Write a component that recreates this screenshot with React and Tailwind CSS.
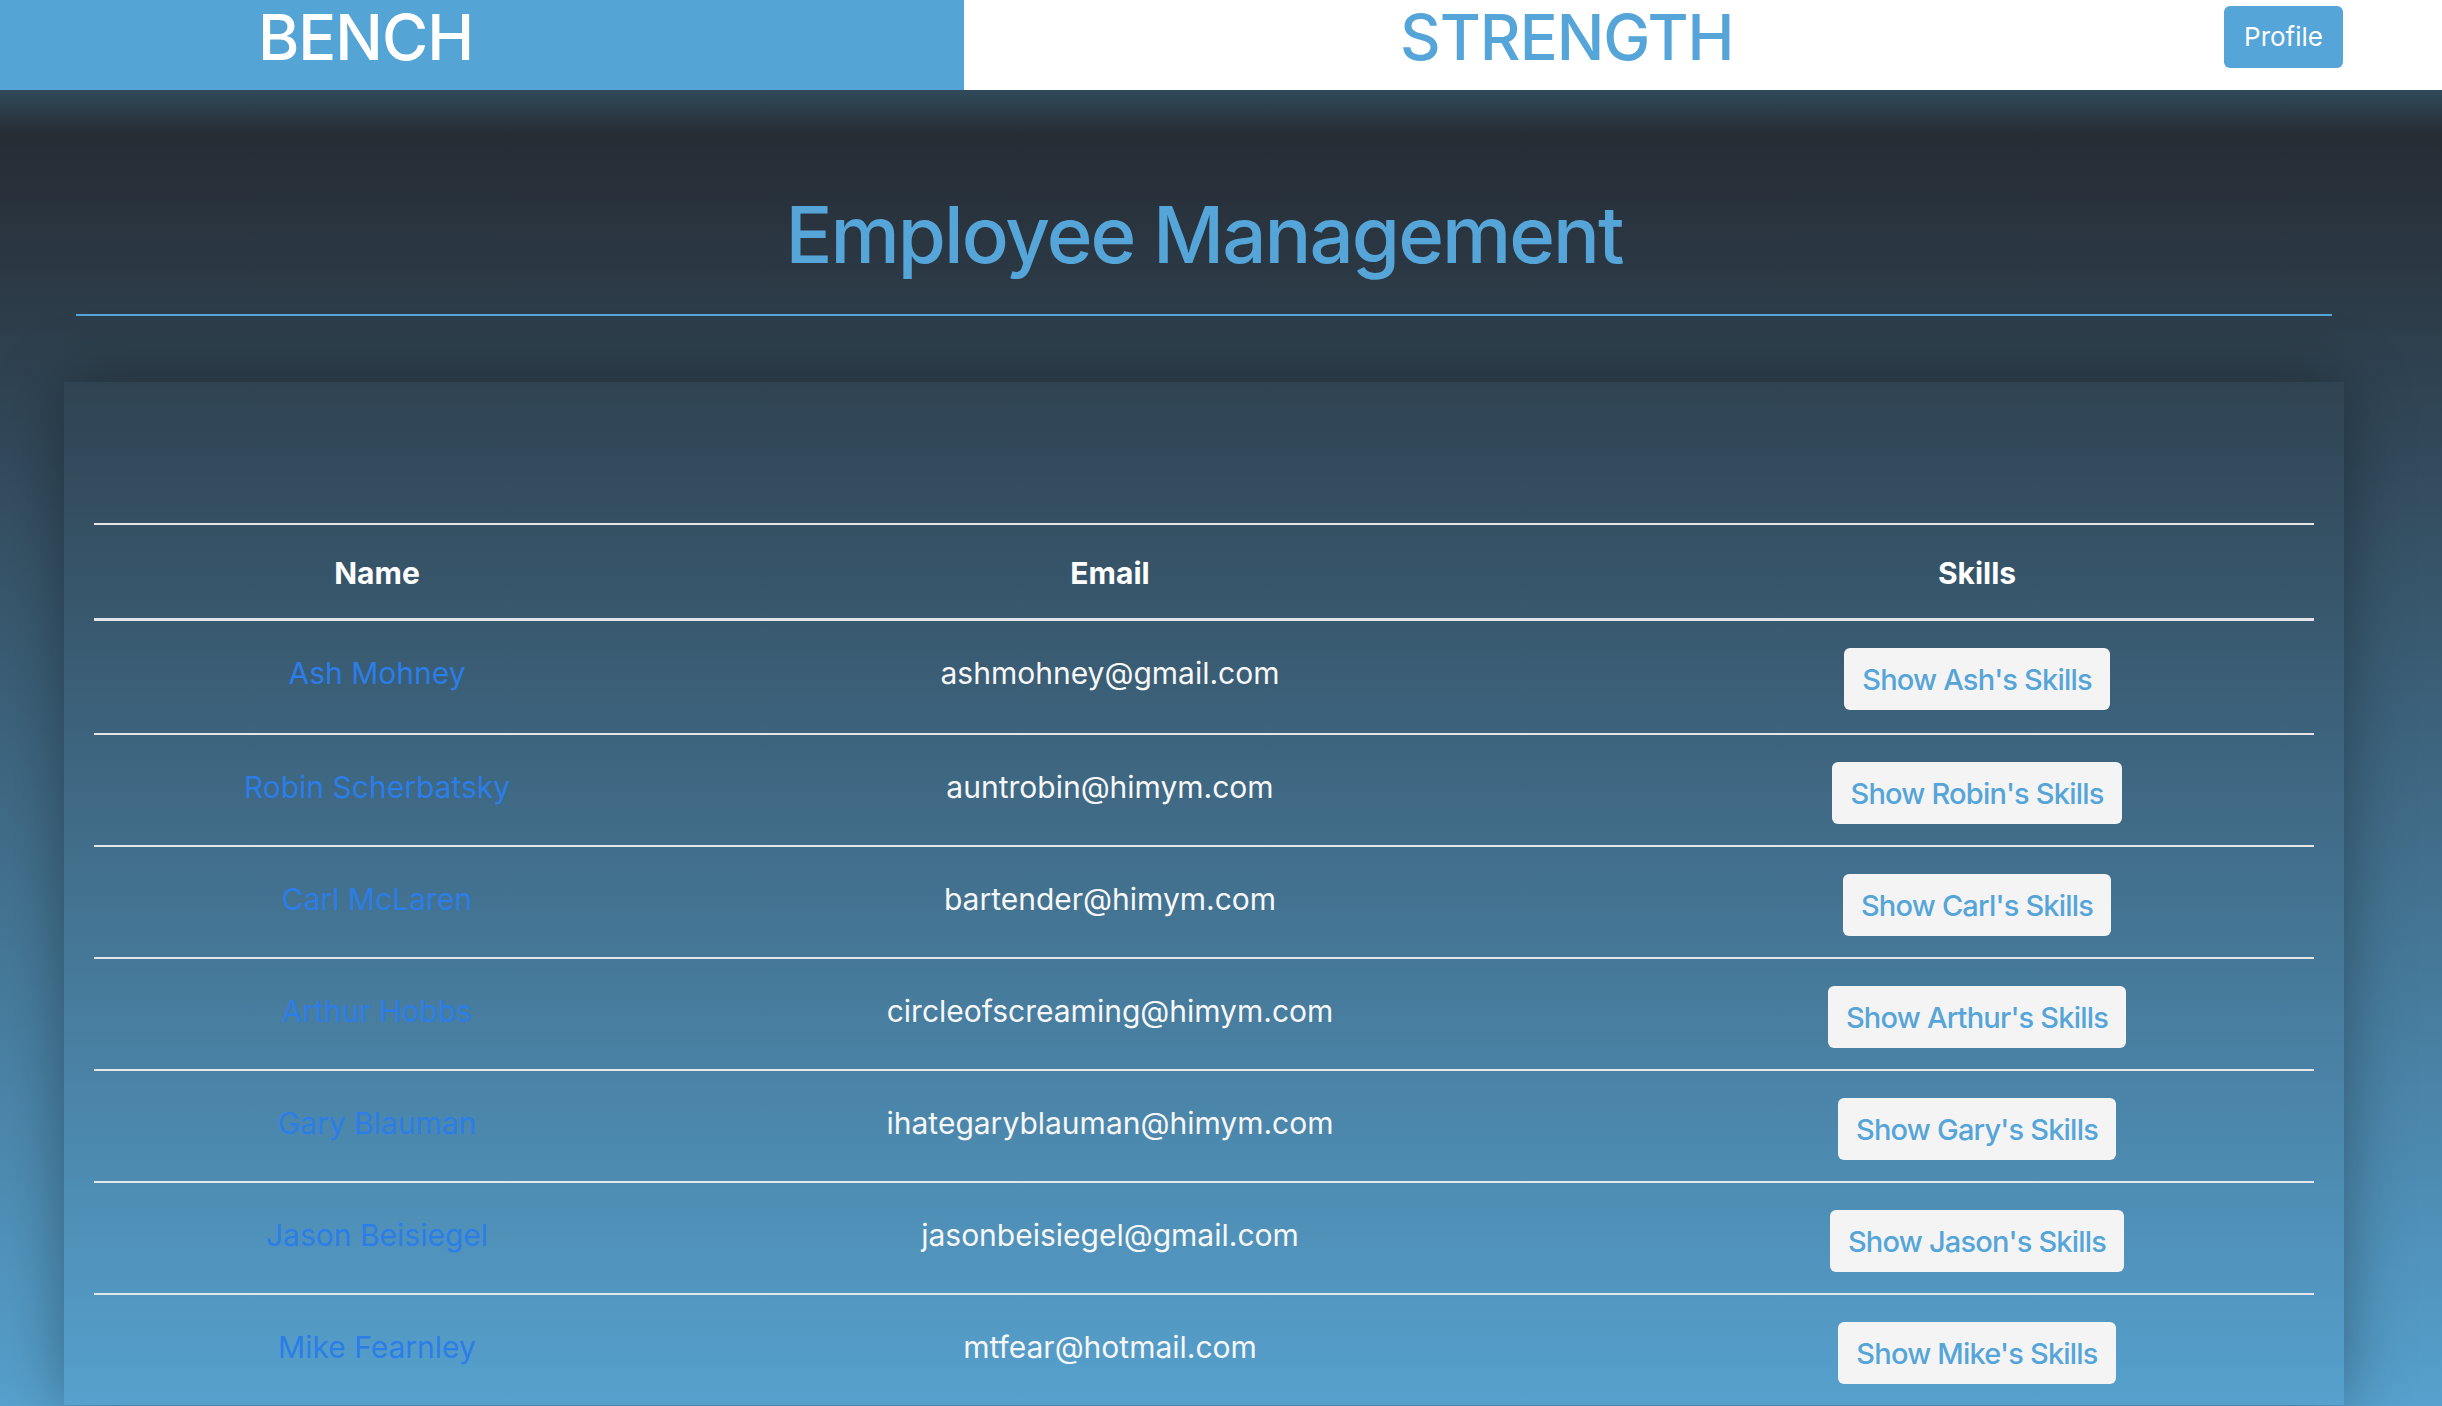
import React from "react";

const rows = [
  { name: "Ash Mohney", email: "ashmohney@gmail.com", first: "Ash" },
  { name: "Robin Scherbatsky", email: "auntrobin@himym.com", first: "Robin" },
  { name: "Carl McLaren", email: "bartender@himym.com", first: "Carl" },
  { name: "Arthur Hobbs", email: "circleofscreaming@himym.com", first: "Arthur" },
  { name: "Gary Blauman", email: "ihategaryblauman@himym.com", first: "Gary" },
  { name: "Jason Beisiegel", email: "jasonbeisiegel@gmail.com", first: "Jason" },
  { name: "Mike Fearnley", email: "mtfear@hotmail.com", first: "Mike" },
];

export default function App() {
  return (
    <div
      className="h-screen overflow-hidden flex flex-col"
      style={{ fontFamily: "Inter, 'Noto Sans', 'Liberation Sans', sans-serif" }}
    >
      <header className="h-[90px] flex shrink-0 bg-white relative z-10">
        <div className="w-[964px] bg-[#54a4d6] flex items-start pl-[258px]">
          <span className="text-white text-[63px] font-medium leading-[1.2] tracking-[-1px]">BENCH</span>
        </div>
        <div className="flex-1 flex items-start">
          <span className="ml-[436px] text-[#55a5d9] text-[63px] font-medium leading-[1.2] tracking-[-1px]">STRENGTH</span>
          <button className="ml-auto mr-[99px] mt-[6px] w-[119px] h-[62px] rounded-[6px] bg-[#55a5d9] text-white text-[26px] leading-none">
            Profile
          </button>
        </div>
      </header>
      <main className="flex-1 bg-[linear-gradient(180deg,#314a5b_0px,#262c34_45px,#56a1ce_1316px)]">
        <div className="ml-[76px] w-[2256px] pt-[106px]">
          <h1 className="text-center text-[#55a5d9] text-[78px] leading-none font-medium tracking-[-2px]">
            Employee Management
          </h1>
          <div className="mt-[40px] h-[2px] bg-[#55a5d9]" />
        </div>
        <div className="ml-[64px] w-[2280px] mt-[66px] pt-[141px] px-[30px] shadow-[0_0_60px_rgba(0,0,0,0.35)]">
          <div className="border-t-2 border-[#e4e6ea]">
            <div className="grid grid-cols-[566px_900px_1fr] border-b-[3px] border-[#e4e6ea] text-white text-[30px] font-bold leading-[45px]">
              <div className="text-center pt-[26px] pb-[22px]">Name</div>
              <div className="text-center pt-[26px] pb-[22px]">Email</div>
              <div className="text-center pt-[26px] pb-[22px] pl-[80px]">Skills</div>
            </div>
            {rows.map((r, i) => (
              <div
                key={r.email}
                className={
                  "grid grid-cols-[566px_900px_1fr] text-[30px] leading-[45px] h-[112px] " +
                  (i > 0 ? "border-t-2 border-[#e4e6ea]" : "")
                }
              >
                <div className="text-center pt-[30px] text-[#2b7de8]">{r.name}</div>
                <div className="text-center pt-[30px] text-[#f7f7f7]">{r.email}</div>
                <div className="flex justify-center items-start pt-[27px] pl-[80px]">
                  <button className="h-[62px] px-[18px] rounded-[6px] bg-[#f4f4f4] text-[#55a5d9] text-[29px] font-medium leading-none tracking-[-0.8px]">
                    Show {r.first}'s Skills
                  </button>
                </div>
              </div>
            ))}
          </div>
        </div>
      </main>
    </div>
  );
}
